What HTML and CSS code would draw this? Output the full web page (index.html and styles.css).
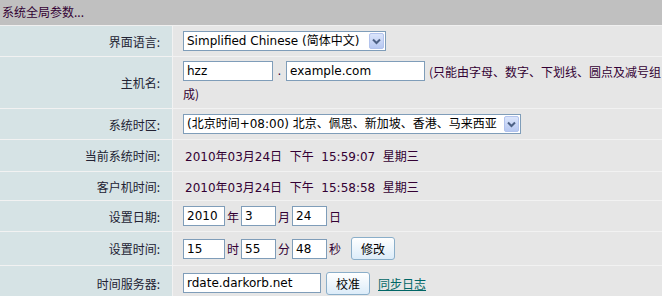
FILE: index.html
```html
<!DOCTYPE html>
<html lang="zh-CN">
<head>
<meta charset="utf-8">
<title>系统全局参数</title>
<link rel="stylesheet" href="styles.css">
</head>
<body>
<div class="panel">
  <div class="title">系统全局参数...</div>
  <table class="form">
    <tr class="r1">
      <th>界面语言:</th>
      <td>
        <span class="select w-lang"><span class="sel-text">Simplified Chinese (简体中文)</span><span class="arrow"><svg width="9" height="7" viewBox="0 0 9 7"><path d="M1 1.5 L4.5 5 L8 1.5" fill="none" stroke="#4d6185" stroke-width="2"/></svg></span></span>
      </td>
    </tr>
    <tr class="r2">
      <th>主机名:</th>
      <td class="host">
        <div class="host-line"><span class="input w-host1">hzz</span><span class="dot">.</span><span class="input w-host2">example.com</span><span class="note">(只能由字母、数字、下划线、圆点及减号组</span></div>
        <div class="host-wrap">成)</div>
      </td>
    </tr>
    <tr class="r3">
      <th>系统时区:</th>
      <td>
        <span class="select w-zone"><span class="sel-text">(北京时间+08:00) 北京、佩思、新加坡、香港、马来西亚</span><span class="arrow"><svg width="9" height="7" viewBox="0 0 9 7"><path d="M1 1.5 L4.5 5 L8 1.5" fill="none" stroke="#4d6185" stroke-width="2"/></svg></span></span>
      </td>
    </tr>
    <tr class="r4">
      <th>当前系统时间:</th>
      <td class="val">2010年03月24日&nbsp;&nbsp;下午&nbsp;&nbsp;15:59:07&nbsp;&nbsp;星期三</td>
    </tr>
    <tr class="r5">
      <th>客户机时间:</th>
      <td class="val">2010年03月24日&nbsp;&nbsp;下午&nbsp;&nbsp;15:58:58&nbsp;&nbsp;星期三</td>
    </tr>
    <tr class="r6">
      <th>设置日期:</th>
      <td class="fields">
        <span class="input w-num">2010</span><span class="unit">年</span><span class="input w-small">3</span><span class="unit">月</span><span class="input w-small">24</span><span class="unit">日</span>
      </td>
    </tr>
    <tr class="r7">
      <th>设置时间:</th>
      <td class="fields">
        <span class="input w-num">15</span><span class="unit">时</span><span class="input w-small">55</span><span class="unit">分</span><span class="input w-small">48</span><span class="unit">秒</span><span class="btn b-edit">修改</span>
      </td>
    </tr>
    <tr class="r8">
      <th>时间服务器:</th>
      <td class="fields">
        <span class="input w-server">rdate.darkorb.net</span><span class="btn b-sync">校准</span><a class="link" href="#">同步日志</a>
      </td>
    </tr>
  </table>
</div>
</body>
</html>
```

FILE: styles.css
```css
html, body {
  margin: 0;
  padding: 0;
  background: #e6e6e6;
}
body {
  font-family: "DejaVu Sans", "Noto Sans CJK SC", sans-serif;
  font-size: 12px;
  color: #330033;
  width: 662px;
  height: 296px;
  overflow: hidden;
}
.panel {
  width: 662px;
}
.title {
  height: 25px;
  line-height: 24px;
  background: #c0c0c0;
  padding-left: 2px;
  color: #330033;
  font-family: "Noto Sans CJK SC", sans-serif;
  font-size: 12px;
  border-bottom: 1px solid #f0f0f0;
}
.form {
  width: 100%;
  border-collapse: collapse;
}
.form th {
  width: 160px;
  background: #d6e3e5;
  text-align: right;
  font-weight: normal;
  font-family: "Noto Sans CJK SC", sans-serif;
  color: #222233;
  padding: 0 12px 0 0;
  border-right: 1px solid #f2f2f2;
  border-bottom: 1px solid #f2f2f2;
  vertical-align: middle;
}
.form td {
  background: #e6e6e6;
  padding: 0 0 0 10px;
  border-bottom: 1px solid #f2f2f2;
  vertical-align: middle;
}
.r1 th, .r1 td { height: 30px; }
.r2 th, .r2 td { height: 47px; }
.r3 th, .r3 td { height: 30px; }
.r4 th, .r4 td { height: 31px; }
.r5 th, .r5 td { height: 28px; }
.r6 th, .r6 td { height: 30px; }
.r7 th, .r7 td { height: 33px; }
.r8 th, .r8 td { height: 34px; border-bottom: none; }

.form td.host {
  padding-top: 4px;
  vertical-align: top;
}
.host-line {
  display: flex;
  align-items: center;
  height: 20px;
  white-space: nowrap;
}
.host-wrap {
  font-family: "Noto Sans CJK SC", sans-serif;
  line-height: 22px;
  margin-top: 2px;
}

.input, .select {
  display: inline-block;
  box-sizing: border-box;
  height: 20px;
  line-height: 18px;
  background: #fff;
  border: 1px solid #7f9db9;
  padding: 0 3px;
  color: #000;
  vertical-align: middle;
  white-space: nowrap;
  overflow: hidden;
  font-family: "DejaVu Sans", "Noto Sans CJK SC", sans-serif;
  flex: none;
}
.select {
  display: inline-flex;
  align-items: center;
  padding: 0 1px 0 3px;
}
.sel-text {
  flex: 1;
  font-family: "DejaVu Sans", "Noto Sans CJK SC", sans-serif;
}
.arrow {
  display: flex;
  align-items: center;
  justify-content: center;
  width: 15px;
  height: 16px;
  background: linear-gradient(#dbe5fb, #b7c8f1);
  border: 1px solid #b2c3ed;
  border-radius: 2px;
  box-sizing: border-box;
}
.w-lang { width: 203px; }
.w-zone { width: 338px; }
.w-host1 { width: 90px; }
.w-host2 { width: 139px; }
.w-num { width: 42px; }
.w-small { width: 35px; }
.w-server { width: 138px; }
.dot {
  display: inline-block;
  width: 13px;
  text-align: center;
  flex: none;
}
.note {
  font-family: "Noto Sans CJK SC", sans-serif;
  margin-left: 4px;
  white-space: nowrap;
}
.val {
  font-family: "DejaVu Sans", "Noto Sans CJK SC", sans-serif;
  padding-left: 12px !important;
}
.fields {
  white-space: nowrap;
}
.unit {
  display: inline-block;
  width: 16px;
  text-align: center;
  vertical-align: middle;
  font-family: "Noto Sans CJK SC", sans-serif;
}
.btn {
  display: inline-block;
  box-sizing: border-box;
  height: 23px;
  line-height: 21px;
  padding: 0 9px;
  border: 1px solid #8aaec9;
  border-radius: 3px;
  background: linear-gradient(#ffffff, #dcecf9);
  color: #000;
  vertical-align: middle;
  font-family: "Noto Sans CJK SC", sans-serif;
}
.b-edit { margin-left: 8px; }
.b-sync { margin-left: 5px; }
.link {
  display: inline-block;
  margin-left: 8px;
  color: #006666;
  text-decoration: underline;
  vertical-align: middle;
  font-family: "Noto Sans CJK SC", sans-serif;
}
```
